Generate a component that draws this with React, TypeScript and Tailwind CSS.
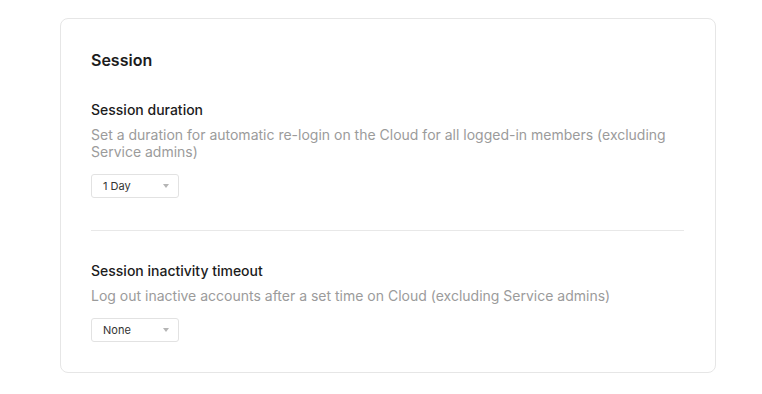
import { ReactNode } from "react";

type SelectBoxProps = {
  value: string;
};

function SelectBox({ value }: SelectBoxProps) {
  return (
    <div className="flex h-[24px] w-[88px] items-center justify-between rounded-[3px] border border-[#e2e2e2] bg-white pl-[11px] pr-[9px]">
      <span className="text-[11px] leading-none text-[#333333]">{value}</span>
      <svg width="6" height="4" viewBox="0 0 6 4" aria-hidden="true">
        <path d="M0 0h6L3 4z" fill="#b5b5b5" />
      </svg>
    </div>
  );
}

type SettingRowProps = {
  title: string;
  description: ReactNode;
  value: string;
};

function SettingRow({ title, description, value }: SettingRowProps) {
  return (
    <div className="flex flex-col">
      <h3 className="text-[14px] font-medium leading-[20px] text-[#1c1c1c]">{title}</h3>
      <p className="mt-[6px] text-[14px] leading-[17px] text-[#9b9b9b]">{description}</p>
      <div className="mt-[14px]">
        <SelectBox value={value} />
      </div>
    </div>
  );
}

export default function App() {
  return (
    <div
      className="min-h-[394px] bg-white pl-[60px] pr-[46px] pt-[18px]"
      style={{ fontFamily: "Inter, 'Noto Sans', sans-serif" }}
    >
      <section className="rounded-[8px] border border-[#e6e6e6] bg-white pb-[30px] pl-[30px] pr-[31px] pt-[29px]">
        <h2 className="text-[16px] font-semibold leading-[24px] text-[#1c1c1c]">Session</h2>

        <div className="mt-[28px]">
          <SettingRow
            title="Session duration"
            description="Set a duration for automatic re-login on the Cloud for all logged-in members (excluding Service admins)"
            value="1 Day"
          />
        </div>

        <div className="mb-[30px] mt-[32px] h-px bg-[#e8e8e8]" />

        <SettingRow
          title="Session inactivity timeout"
          description="Log out inactive accounts after a set time on Cloud (excluding Service admins)"
          value="None"
        />
      </section>
    </div>
  );
}
